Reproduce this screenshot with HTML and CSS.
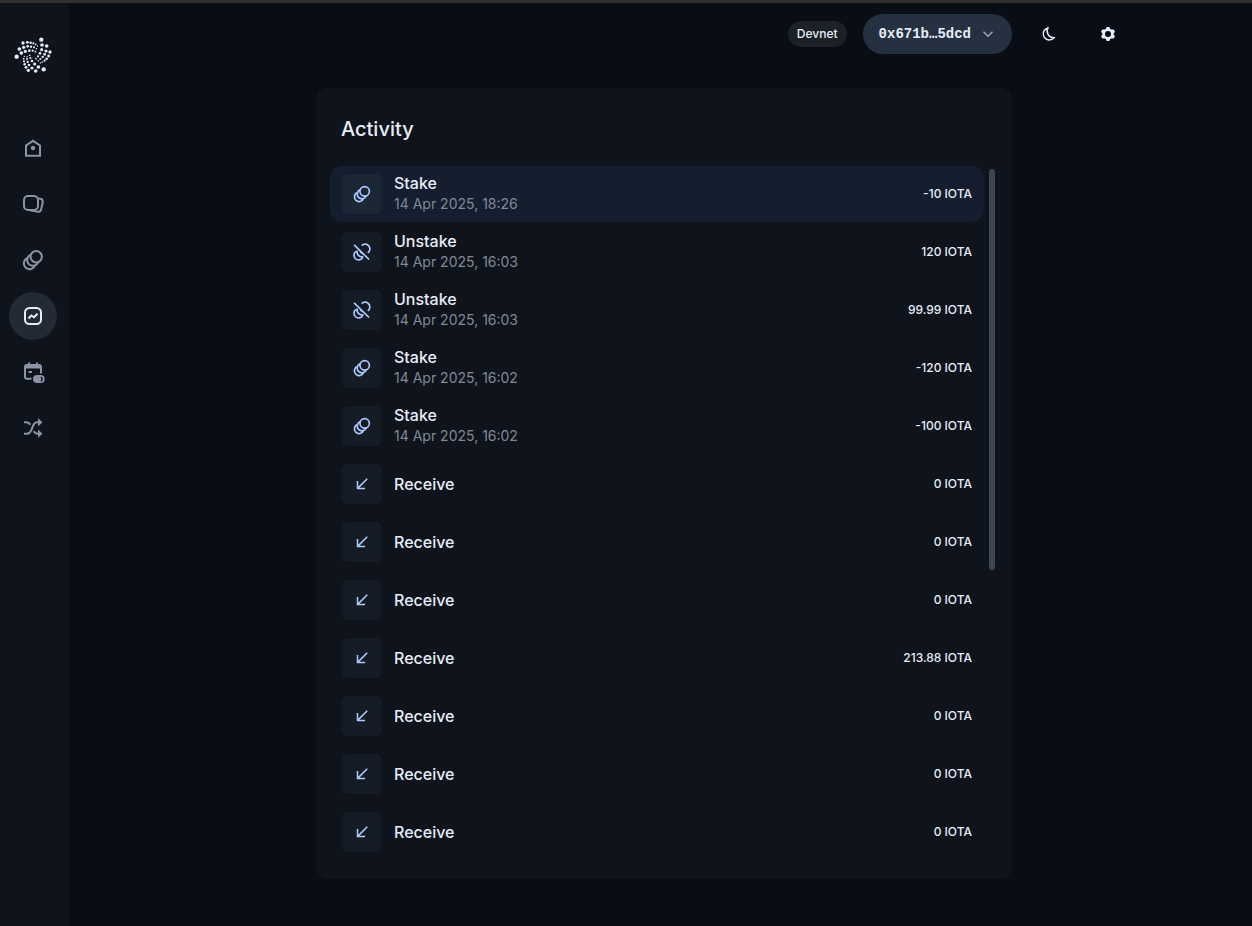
FILE: index.html
```html
<!DOCTYPE html>
<html lang="en">

<head>
    <meta charset="UTF-8">
    <meta name="viewport" content="width=device-width, initial-scale=1.0">
    <title>Activity</title>
    <link rel="stylesheet" href="styles.css">
</head>

<body>
    <!-- shared icons -->
    <svg class="sprite" aria-hidden="true">
        <symbol id="i-stake" viewBox="0 0 24 24">
            <circle cx="15.2" cy="8.8" r="5.7" />
            <path d="M10 6.7A5.7 5.7 0 1 0 17.3 14M6.8 10A5.7 5.7 0 1 0 14 17.2" />
        </symbol>
        <symbol id="i-unstake" viewBox="0 0 24 24">
            <path d="M2.500 3.500L20.500 21M11.600 4.400A5.700 5.700 0 1 1 19 13M6.400 10.300A5.700 5.700 0 0 0 13.600 17.500M4.800 11.200A5.700 5.700 0 1 0 13 18.700M9.600 10.500A5.700 5.700 0 0 0 13.400 14.300" />
        </symbol>
        <symbol id="i-receive" viewBox="0 0 24 24">
            <path d="M19 5L6.500 17.500M6 8V18H16" />
        </symbol>
    </svg>

    <div class="app">
        <!-- sidebar -->
        <aside class="sidebar">
            <a class="logo" href="#" aria-label="IOTA">
                <svg viewBox="42 111 114 111" width="38" height="37" fill="currentColor">
                    <circle cx="50" cy="170" r="6.500" /><circle cx="64" cy="159" r="5.500" /><circle cx="76" cy="154" r="4.800" /><circle cx="88" cy="152" r="4" /><circle cx="98" cy="152" r="3.200" /><circle cx="106" cy="155" r="2.500" />
                    <circle cx="58" cy="147" r="5.500" /><circle cx="71" cy="142" r="4.800" /><circle cx="83" cy="139" r="4" /><circle cx="93" cy="140" r="3.500" /><circle cx="102" cy="142" r="3" /><circle cx="109" cy="146" r="2.300" />
                    <circle cx="69" cy="129" r="5" /><circle cx="82" cy="127" r="4.300" /><circle cx="92" cy="128" r="3.800" /><circle cx="100" cy="130" r="3.200" /><circle cx="107" cy="133" r="2.600" /><circle cx="112" cy="138" r="2" />
                    <circle cx="124" cy="119" r="6.500" /><circle cx="126" cy="135" r="5.500" /><circle cx="125" cy="149" r="4.800" /><circle cx="120" cy="160" r="4" /><circle cx="114" cy="169" r="3.200" /><circle cx="108" cy="176" r="2.500" />
                    <circle cx="140" cy="138" r="5.500" /><circle cx="138" cy="153" r="4.800" /><circle cx="134" cy="163" r="4" /><circle cx="128" cy="171" r="3.500" /><circle cx="121" cy="177" r="3" /><circle cx="115" cy="182" r="2.300" />
                    <circle cx="150" cy="156" r="5" /><circle cx="146" cy="168" r="4.300" /><circle cx="140" cy="176" r="3.800" /><circle cx="134" cy="182" r="3.200" /><circle cx="127" cy="186" r="2.600" /><circle cx="121" cy="189" r="2" />
                    <circle cx="131" cy="208" r="6.500" /><circle cx="115" cy="201" r="5.500" /><circle cx="104" cy="192" r="4.800" /><circle cx="96" cy="183" r="4" /><circle cx="91" cy="174" r="3.200" /><circle cx="89" cy="166" r="2.500" />
                    <circle cx="107" cy="213" r="5.500" /><circle cx="96" cy="204" r="4.800" /><circle cx="87" cy="195" r="4" /><circle cx="83" cy="186" r="3.500" /><circle cx="81" cy="177" r="3" /><circle cx="81" cy="170" r="2.300" />
                    <circle cx="85" cy="211" r="5" /><circle cx="78" cy="202" r="4.300" /><circle cx="74" cy="193" r="3.800" /><circle cx="72" cy="184" r="3.200" /><circle cx="71" cy="176" r="2.600" /><circle cx="73" cy="169" r="2" />
                </svg>
            </a>
            <nav class="nav">
                <a class="nav-item" href="#home" aria-label="Home">
                    <svg class="icon" viewBox="0 0 24 24">
                        <path d="M5 9.500L12 4.800L19 9.500V19.700H5Z" />
                        <circle class="solid" cx="12" cy="12" r="2.200" />
                    </svg>
                </a>
                <a class="nav-item" href="#assets" aria-label="Assets">
                    <svg class="icon" viewBox="0 0 24 24">
                        <rect x="3" y="4" width="14" height="14" rx="4" />
                        <path d="M17.500 6.200L19.400 6.700A3 3 0 0 1 21.700 10.200L20.200 17.200A3 3 0 0 1 16.800 19.700L9 18.300" />
                    </svg>
                </a>
                <a class="nav-item" href="#staking" aria-label="Staking">
                    <svg class="icon"><use href="#i-stake" /></svg>
                </a>
                <a class="nav-item active" href="#activity" aria-label="Activity">
                    <svg class="icon" viewBox="0 0 24 24">
                        <rect x="4" y="4" width="16" height="16" rx="4.500" />
                        <path d="M7.500 14.500L10.300 11.500L13 13.300L16.500 9.700" />
                    </svg>
                </a>
                <a class="nav-item" href="#vesting" aria-label="Vesting">
                    <svg class="icon" viewBox="0 0 24 24">
                        <path d="M10.500 18.700H6A2 2 0 0 1 4 16.700V7A2 2 0 0 1 6 5H18A2 2 0 0 1 20 7V13.500M8 2.500V5M16 2.500V5M7.500 12H11" />
                        <path class="solid" d="M4 5H20V8.500H4Z" />
                        <path class="solid" fill-rule="evenodd" d="M16 15H19.700A4 4 0 0 1 19.700 23H16A4 4 0 0 1 16 15ZM19.300 16.500Q21.300 19 19.300 21.500A2.500 2.500 0 0 0 19.300 16.500Z" />
                    </svg>
                </a>
                <a class="nav-item" href="#migrations" aria-label="Migrations">
                    <svg class="icon" viewBox="0 0 24 24">
                        <path d="M3 17.700H6C12.500 17.700 10 6.300 16 6.300H18M3 6.300H5C7.500 6.300 8.500 7.300 9.300 8.800M12.800 15.200C13.500 16.700 14.500 17.700 16.500 17.700H18" />
                        <path class="solid" d="M17 2.200L21.500 6.300L17 10.400ZM17 13.600L21.500 17.700L17 21.800Z" />
                    </svg>
                </a>
            </nav>
        </aside>

        <main class="main">
            <header class="header">
                <span class="network">Devnet</span>
                <button class="account" type="button">
                    0x671b…5dcd
                    <svg class="chevron" viewBox="0 0 16 16"><path d="M3.500 5.800L8 10.300L12.500 5.800" /></svg>
                </button>
                <div class="actions">
                    <button class="round" type="button" aria-label="Toggle theme">
                        <svg viewBox="0 0 16 16"><path d="M7.800 1.900A6.100 6.100 0 1 0 14 11.700C8.600 12 5.800 6.500 7.800 1.900Z" /></svg>
                    </button>
                    <button class="round" type="button" aria-label="Settings">
                        <svg viewBox="0 0 16 16"><path class="solid" fill-rule="evenodd" d="M6.700 1H9.300L10.200 2.900L11.500 3.600L13.700 3.400L15 5.700L13.700 7.300V8.700L15 10.300L13.700 12.600L11.500 12.400L10.200 13.100L9.300 15H6.700L5.800 13.100L4.500 12.400L2.300 12.600L1 10.300L2.300 8.700V7.300L1 5.700L2.300 3.400L4.500 3.600L5.800 2.900ZM8 5A3 3 0 0 0 8 11A3 3 0 0 0 8 5Z" /></svg>
                    </button>
                </div>
            </header>

            <!-- activity list -->
            <section class="card">
                <h1 class="title">Activity</h1>
                <div class="scroll">
                    <ul class="list">
                        <li>
                            <button class="row selected" type="button">
                                <span class="badge"><svg><use href="#i-stake" /></svg></span>
                                <span class="info"><span class="name">Stake</span><span class="date">14 Apr 2025, 18:26</span></span>
                                <span class="amount">-10 IOTA</span>
                            </button>
                        </li>
                        <li>
                            <button class="row" type="button">
                                <span class="badge"><svg><use href="#i-unstake" /></svg></span>
                                <span class="info"><span class="name">Unstake</span><span class="date">14 Apr 2025, 16:03</span></span>
                                <span class="amount">120 IOTA</span>
                            </button>
                        </li>
                        <li>
                            <button class="row" type="button">
                                <span class="badge"><svg><use href="#i-unstake" /></svg></span>
                                <span class="info"><span class="name">Unstake</span><span class="date">14 Apr 2025, 16:03</span></span>
                                <span class="amount">99.99 IOTA</span>
                            </button>
                        </li>
                        <li>
                            <button class="row" type="button">
                                <span class="badge"><svg><use href="#i-stake" /></svg></span>
                                <span class="info"><span class="name">Stake</span><span class="date">14 Apr 2025, 16:02</span></span>
                                <span class="amount">-120 IOTA</span>
                            </button>
                        </li>
                        <li>
                            <button class="row" type="button">
                                <span class="badge"><svg><use href="#i-stake" /></svg></span>
                                <span class="info"><span class="name">Stake</span><span class="date">14 Apr 2025, 16:02</span></span>
                                <span class="amount">-100 IOTA</span>
                            </button>
                        </li>
                        <li>
                            <button class="row" type="button">
                                <span class="badge receive"><svg><use href="#i-receive" /></svg></span>
                                <span class="info"><span class="name">Receive</span></span>
                                <span class="amount">0 IOTA</span>
                            </button>
                        </li>
                        <li>
                            <button class="row" type="button">
                                <span class="badge receive"><svg><use href="#i-receive" /></svg></span>
                                <span class="info"><span class="name">Receive</span></span>
                                <span class="amount">0 IOTA</span>
                            </button>
                        </li>
                        <li>
                            <button class="row" type="button">
                                <span class="badge receive"><svg><use href="#i-receive" /></svg></span>
                                <span class="info"><span class="name">Receive</span></span>
                                <span class="amount">0 IOTA</span>
                            </button>
                        </li>
                        <li>
                            <button class="row" type="button">
                                <span class="badge receive"><svg><use href="#i-receive" /></svg></span>
                                <span class="info"><span class="name">Receive</span></span>
                                <span class="amount">213.88 IOTA</span>
                            </button>
                        </li>
                        <li>
                            <button class="row" type="button">
                                <span class="badge receive"><svg><use href="#i-receive" /></svg></span>
                                <span class="info"><span class="name">Receive</span></span>
                                <span class="amount">0 IOTA</span>
                            </button>
                        </li>
                        <li>
                            <button class="row" type="button">
                                <span class="badge receive"><svg><use href="#i-receive" /></svg></span>
                                <span class="info"><span class="name">Receive</span></span>
                                <span class="amount">0 IOTA</span>
                            </button>
                        </li>
                        <li>
                            <button class="row" type="button">
                                <span class="badge receive"><svg><use href="#i-receive" /></svg></span>
                                <span class="info"><span class="name">Receive</span></span>
                                <span class="amount">0 IOTA</span>
                            </button>
                        </li>
                    </ul>
                    <div class="track"><div class="thumb"></div></div>
                </div>
            </section>
        </main>
    </div>
</body>

</html>
```
FILE: styles.css
```css
* {
    box-sizing: border-box;
}

body {
    margin: 0;
    background: #090d15;
    color: #e6edf8;
    font-family: Inter, sans-serif;
}

button {
    border: 0;
    margin: 0;
    padding: 0;
    background: none;
    color: inherit;
    font: inherit;
    cursor: pointer;
}

svg {
    display: block;
    fill: none;
    stroke: currentColor;
    stroke-width: 2;
}

.solid {
    fill: currentColor;
    stroke: none;
}

.sprite {
    display: none;
}

.app {
    display: flex;
    min-height: 100vh;
    border-top: 3px solid #303030;
}

/* sidebar */

.sidebar {
    width: 69px;
    flex-shrink: 0;
    padding: 34px 12px 0 9px;
    background: #0f131b;
}

.logo {
    display: flex;
    justify-content: center;
    color: #e6edf8;
}

.logo svg {
    fill: currentColor;
    stroke: none;
}

.nav {
    display: flex;
    flex-direction: column;
    gap: 8px;
    margin-top: 50px;
}

.nav-item {
    display: flex;
    align-items: center;
    justify-content: center;
    width: 48px;
    height: 48px;
    border-radius: 50%;
    color: #8a94a4;
}

.nav-item.active {
    background: #222a35;
    color: #e6edf8;
}

.icon {
    width: 24px;
    height: 24px;
}

/* top bar */

.main {
    flex: 1;
    padding: 11px 0 40px 7px;
}

.header {
    display: flex;
    align-items: center;
    justify-content: flex-end;
    gap: 16px;
    max-width: 928px;
    margin: 0 auto 34px;
}

.network {
    padding: 5px 9px;
    border-radius: 13px;
    background: #1c2027;
    font-size: 12px;
    font-weight: 500;
    line-height: 16px;
}

.account {
    display: flex;
    align-items: center;
    gap: 9px;
    height: 40px;
    padding: 0 16px;
    border-radius: 20px;
    background: #253040;
    font-family: "Liberation Mono", monospace;
    font-size: 14px;
    font-weight: 700;
}

.chevron {
    width: 16px;
    height: 16px;
    color: #9aa7b8;
    stroke-width: 1.5;
}

.actions {
    display: flex;
    gap: 20px;
}

.round {
    display: flex;
    align-items: center;
    justify-content: center;
    width: 40px;
    height: 40px;
    border-radius: 50%;
}

.round svg {
    width: 16px;
    height: 16px;
    stroke-width: 1.5;
}

/* card */

.card {
    max-width: 696px;
    margin: 0 auto;
    padding: 27px 17px 19px 14px;
    border-radius: 12px;
    background: #0f131b;
}

.title {
    margin: 0 0 23px;
    padding-left: 11px;
    font-size: 20px;
    font-weight: 500;
    line-height: 28px;
}

.scroll {
    display: flex;
    gap: 5px;
}

.list {
    display: flex;
    flex: 1;
    flex-direction: column;
    gap: 2px;
    margin: 0;
    padding: 0;
    list-style: none;
}

.row {
    display: flex;
    align-items: center;
    gap: 12px;
    width: 100%;
    height: 56px;
    padding: 8px 12px;
    border-radius: 12px;
    text-align: left;
}

.row.selected {
    background: #151e2e;
}

.badge {
    display: flex;
    align-items: center;
    justify-content: center;
    width: 40px;
    height: 40px;
    border-radius: 6px;
    background: #161c25;
    color: #abcbff;
}

.selected .badge {
    background: #1c2736;
}

.badge svg {
    width: 20px;
    height: 20px;
}

.badge.receive svg {
    width: 18px;
    height: 18px;
}

.info {
    display: flex;
    flex: 1;
    flex-direction: column;
    gap: 1px;
    padding-bottom: 1px;
}

.name {
    font-size: 16px;
    font-weight: 500;
    line-height: 20px;
}

.date {
    color: #7f8999;
    font-size: 14px;
    line-height: 20px;
}

.amount {
    padding-bottom: 2px;
    font-size: 12px;
    font-weight: 500;
}

.track {
    width: 6px;
    padding-top: 3px;
}

.thumb {
    height: 401px;
    border-radius: 3px;
    background: #3e4653;
}
```
